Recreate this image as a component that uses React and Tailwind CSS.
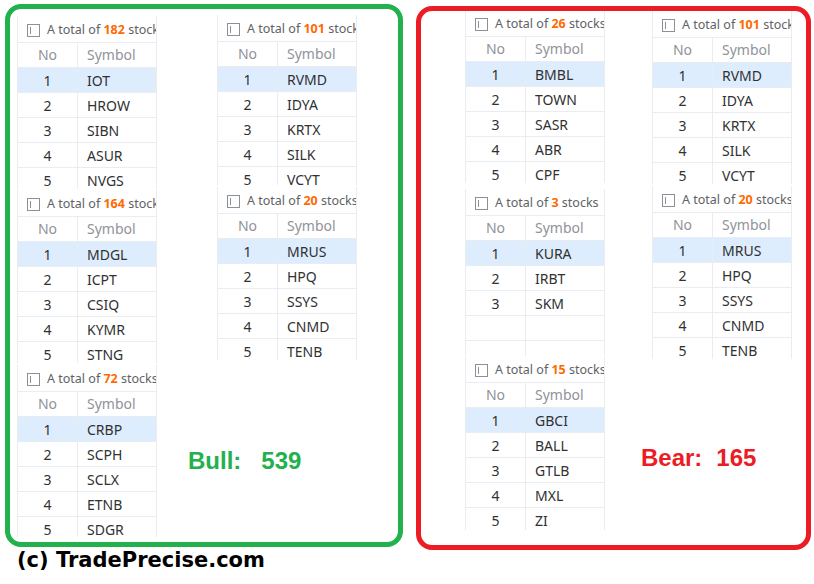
const GREEN_A = { total: 182, rows: ['IOT', 'HROW', 'SIBN', 'ASUR', 'NVGS'] };
const GREEN_B = { total: 164, rows: ['MDGL', 'ICPT', 'CSIQ', 'KYMR', 'STNG'] };
const GREEN_C = { total: 72, rows: ['CRBP', 'SCPH', 'SCLX', 'ETNB', 'SDGR'] };
const GREEN_D = { total: 101, rows: ['RVMD', 'IDYA', 'KRTX', 'SILK', 'VCYT'] };
const GREEN_E = { total: 20, rows: ['MRUS', 'HPQ', 'SSYS', 'CNMD', 'TENB'] };

const RED_F = { total: 26, rows: ['BMBL', 'TOWN', 'SASR', 'ABR', 'CPF'] };
const RED_G = { total: 3, rows: ['KURA', 'IRBT', 'SKM', '', ''] };
const RED_H = { total: 15, rows: ['GBCI', 'BALL', 'GTLB', 'MXL', 'ZI'] };

function Checkbox() {
  return (
    <svg width="13" height="13" viewBox="0 0 13 13" className="shrink-0">
      <rect x="0.5" y="0.5" width="12" height="12" fill="#fff" stroke="#8c9197" />
      <line x1="3.5" y1="3" x2="3.5" y2="10" stroke="#8c9197" />
    </svg>
  );
}

function StockTable({ data, className, title = 'h-[27px]' }) {
  return (
    <div className={`w-[140px] overflow-hidden bg-white border-x border-[#e9ecf1] ${className}`}>
      <div className={`${title} flex items-center pt-[2px] pl-[9px] gap-[7px] border-b border-[#e9ecf1] whitespace-nowrap text-[12.5px] text-[#606266]`}>
        <Checkbox />
        <span>
          A total of <span className="font-bold text-[#ff6a00]">{data.total}</span> stocks
        </span>
      </div>
      <div className="grid grid-cols-[60px_80px] text-[14px]">
        <div className="h-[25px] leading-[24px] text-center text-[#909399] border-r border-b border-[#e9ecf1]">No</div>
        <div className="h-[25px] leading-[24px] pl-[9px] text-[#909399] border-b border-[#e9ecf1]">Symbol</div>
        {data.rows.map((sym, i) => (
          <div key={i} className="contents">
            <div className={`h-[25px] leading-[25px] text-center text-[#303133] border-r border-b border-[#e9ecf1] ${i === 0 ? 'bg-[#deedfd]' : ''}`}>
              {sym ? i + 1 : ''}
            </div>
            <div className={`h-[25px] leading-[25px] pl-[9px] text-[#303133] border-b border-[#e9ecf1] ${i === 0 ? 'bg-[#deedfd]' : ''}`}>
              {sym}
            </div>
          </div>
        ))}
      </div>
    </div>
  );
}

export default function App() {
  return (
    <div className="w-[814px] h-[584px] bg-white overflow-hidden font-['Noto_Sans',sans-serif]">
      <div className="flex items-start">
        {/* bull side */}
        <div className="ml-[5px] mt-[4px] w-[398px] h-[543px] border-[5px] border-[#22b14c] rounded-[16px] flex pl-[7px]">
          <div className="flex flex-col">
            <StockTable data={GREEN_A} className="mt-[7px] h-[173px]" />
            <StockTable data={GREEN_B} className="mt-[1px] h-[173px]" />
            <StockTable data={GREEN_C} className="mt-[2px] h-[172px]" />
          </div>
          <div className="flex flex-col items-start">
            <StockTable data={GREEN_D} className="ml-[60px] mt-[6px] h-[170px]" />
            <StockTable data={GREEN_E} className="ml-[60px] mt-[2px] h-[173px]" />
            <div className="ml-[31px] mt-[89px] flex font-['Liberation_Sans',Arial,sans-serif] font-bold text-[24px] leading-[24px] text-[#22b14c]">
              <span>Bull:</span>
              <span className="ml-[20px]">539</span>
            </div>
          </div>
        </div>

        {/* bear side */}
        <div className="ml-[13px] mt-[6px] w-[395px] h-[544px] border-[5px] border-[#ed1c24] rounded-[16px] flex pl-[44px]">
          <div className="flex flex-col">
            <StockTable data={RED_F} className="mt-0 h-[172px]" title="h-[26px]" />
            <StockTable data={RED_G} className="mt-[6px] h-[167px]" />
            <StockTable data={RED_H} className="mt-[1px] h-[173px]" title="h-[26px]" />
          </div>
          <div className="flex flex-col items-start">
            <StockTable data={GREEN_D} className="ml-[47px] mt-0 h-[173px]" />
            <StockTable data={GREEN_E} className="ml-[47px] mt-[2px] h-[173px]" />
            <div className="ml-[36px] mt-[87px] flex font-['Liberation_Sans',Arial,sans-serif] font-bold text-[24px] leading-[24px] text-[#ed1c24]">
              <span>Bear:</span>
              <span className="ml-[14px]">165</span>
            </div>
          </div>
        </div>
      </div>

      <div className="pl-[17px] font-['DejaVu_Sans',sans-serif] font-bold text-[21px] leading-[20px] text-black whitespace-nowrap">
        (c) TradePrecise.com
      </div>
    </div>
  );
}
